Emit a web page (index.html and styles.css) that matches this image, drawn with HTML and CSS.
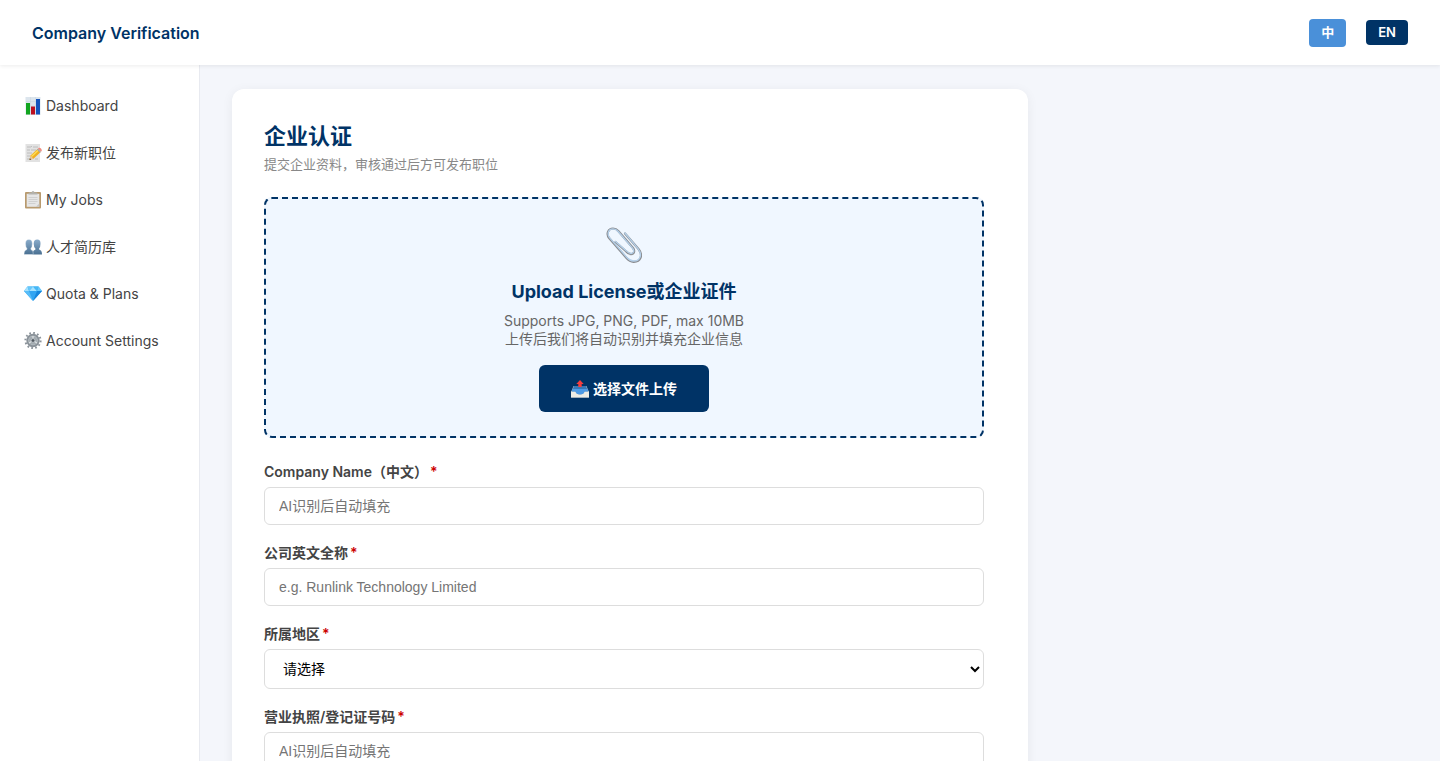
FILE: index.html
```
<!DOCTYPE html>
<html lang="zh-CN">
<head>
    <meta charset="UTF-8">
    <meta name="viewport" content="width=device-width, initial-scale=1.0">
    <title>Company Verification</title>
    <link rel="stylesheet" href="styles.css">
</head>
<body>
    <header class="topbar">
        <h1>Company Verification</h1>
        <div class="lang-switch">
            <button type="button" class="lang-btn lang-zh">中</button>
            <button type="button" class="lang-btn lang-en">EN</button>
        </div>
    </header>
    <div class="layout">
        <nav class="sidebar">
            <a href="#">
                <svg class="icon" viewBox="0 0 18 18" aria-hidden="true">
                    <rect x="1.5" width="15" height="18" fill="#dce5ed"/>
                    <path d="M2 4.500h14M2 9h14M2 13.500h14M6.500 0v18M11.500 0v18" stroke="#c8d5e0" stroke-width=".5"/>
                    <rect x="2" y="6" width="4" height="11.500" fill="#12a51f"/>
                    <rect x="7" y="9.500" width="4" height="8" fill="#bd1020"/>
                    <rect x="12" y="2" width="4" height="15.500" fill="#1453bd"/>
                </svg>
                <span>Dashboard</span>
            </a>
            <a href="#">
                <svg class="icon" viewBox="0 0 18 18" aria-hidden="true">
                    <rect x="1.500" width="14.500" height="18" fill="#e2e2e2"/>
                    <path d="M3 3h4l1-1M9 3h5M3 6h3M7 6h5M3 9h5M3 12h3M3 15h4M11 15h3" stroke="#b5b5b5" stroke-width=".8" fill="none"/>
                    <path d="M5.500 16l1-4.500 7-6.500 3 3.200-7 6.500z" fill="#f0b021"/>
                    <path d="M7.500 12.500l7-6.500" stroke="#ffdf56" stroke-width="1.200"/>
                    <path d="M5.500 16l1-4.500 3 3.200z" fill="#e7c49a"/>
                    <path d="M5.500 16l.4-1.700 1.200 1.200z" fill="#333"/>
                    <path d="M13 5.500l1-1 3 3.200-1 1z" fill="#a5a7ac"/>
                    <path d="M14 4.500l.8-.7q1.200-.4 2.200.8t.8 2.200l-.8.900z" fill="#ef8d80"/>
                </svg>
                <span>发布新职位</span>
            </a>
            <a href="#">
                <svg class="icon" viewBox="0 0 18 18" aria-hidden="true">
                    <rect x="1" y="1" width="16" height="16.500" rx="1" fill="#b89a6e"/>
                    <rect x="2.700" y="2.800" width="12.600" height="13" fill="#e6e6e6"/>
                    <path d="M4.500 6.500h9M4.500 8.500h9M4.500 10.500h9M4.500 12.500h7" stroke="#d0d0d0" stroke-width="1.200"/>
                    <path d="M12 15.800l3.300-3.300v3.300z" fill="#c6c6c6"/>
                    <path d="M4.500 3.500V2.300q0-.8 1-.8h2Q7.700 0 9 0t1.500 1.500h2q1 0 1 .8v1.200z" fill="#b3b2ad"/>
                </svg>
                <span>My Jobs</span>
            </a>
            <a href="#">
                <svg class="icon" viewBox="0 0 18 18" aria-hidden="true">
                    <defs>
                        <linearGradient id="people" x2="0" y2="1">
                            <stop stop-color="#8aaccb"/>
                            <stop offset="1" stop-color="#4a7092"/>
                        </linearGradient>
                    </defs>
                    <path d="M8.500 16.500q0-4 2.300-4.500.9-.3.700-1.300Q9.700 9.100 9.700 5.700 9.700 1.500 13.200 1.500t3.300 4.200q0 3.400-1.500 5-.1 1 1 1.400 2 .6 2 4.400z" fill="url(#people)"/>
                    <path d="M0 16.500q0-3.800 2-4.400 1.100-.4 1-1.400-1.500-1.600-1.500-5Q1.500 1.500 4.900 1.500t3.400 4.200q0 3.400-1.500 5-.1 1 1 1.400 1.500.6 1.500 4.400z" fill="url(#people)" stroke="#f4f7fa" stroke-width=".4"/>
                </svg>
                <span>人才简历库</span>
            </a>
            <a href="#">
                <svg class="icon" viewBox="0 0 18 18" aria-hidden="true">
                    <path d="M3.500 1.500h11L18 6 9 16 0 6z" fill="#31a5f2"/>
                    <path d="M3.500 1.500L5 6H0zM9 1.500L13 6H5z" fill="#a4e2ff"/>
                    <path d="M3.500 1.500H9L5 6zM14.500 1.500L18 6h-5z" fill="#66c8fb"/>
                    <path d="M9 1.500h5.500L13 6z" fill="#46b8f5"/>
                    <path d="M0 6h5l4 10z" fill="#58bdf8"/>
                    <path d="M13 6h5L9 16z" fill="#1686dc"/>
                </svg>
                <span>Quota &amp; Plans</span>
            </a>
            <a href="#">
                <svg class="icon" viewBox="0 0 18 18" aria-hidden="true">
                    <circle cx="9" cy="8.500" r="7.600" fill="none" stroke="#8a9299" stroke-width="2" stroke-dasharray="1.700 2.280"/>
                    <circle cx="9" cy="8.500" r="5.700" fill="#c5ccd0" stroke="#8a9299" stroke-width="2"/>
                    <circle cx="9" cy="8.500" r="4.300" fill="#a3abb0"/>
                    <path d="M9 8.500V4M9 8.500l4 2.500M9 8.500L5 11" stroke="#dde1e3" stroke-width="1.300"/>
                    <circle cx="9" cy="8.500" r="1.900" fill="#50585f" stroke="#bcc3c8" stroke-width=".9"/>
                </svg>
                <span>Account Settings</span>
            </a>
        </nav>
        <main class="content">
            <section class="card">
                <h2>企业认证</h2>
                <p class="subtitle">提交企业资料，审核通过后方可发布职位</p>
                <div class="upload-box">
                    <svg class="clip" viewBox="0 0 36 36" aria-hidden="true">
                        <g fill="none" stroke-linecap="round" stroke-linejoin="round">
                            <path d="M19 6.500L32.500 22C37.500 28.500 34.500 35 27.500 34.800 24.500 34.700 22.500 33.300 20.500 31L3.300 11.300C-.4 6.500 2.500 1.500 7 1.500 9.500 1.500 11 2.500 12.500 4.300L27 21C29.300 24 28 27.200 25 27.200 23 27.200 21.500 26.200 20 24.300L9.500 15" stroke="#8b8d91" stroke-width="2.200"/>
                            <path d="M18.900 6L32 21.600C36.800 27.800 34 34.200 27.500 34 24.700 33.900 22.800 32.700 20.900 30.500L3.700 10.900C.4 6.500 2.800 1.800 7 1.800 9.300 1.800 10.700 2.700 12.200 4.500L26.600 21.100C28.700 23.900 27.600 26.500 25 26.500 23.200 26.500 21.800 25.600 20.400 23.900L9.500 14.500" stroke="#b4d0ea" stroke-width="1.300"/>
                        </g>
                    </svg>
                    <h3>Upload License或企业证件</h3>
                    <p>Supports JPG, PNG, PDF, max 10MB<br>上传后我们将自动识别并填充企业信息</p>
                    <button type="button" class="upload-btn">
                        <svg class="icon" viewBox="0 0 18 18" aria-hidden="true">
                            <path d="M2.500 6h13L18 12v5.500H0V12z" fill="#aab7c2"/>
                            <path d="M3 6h12l2 5.500H1z" fill="#3578b7"/>
                            <path d="M0 11.500h4.500q.5 3 4.500 3t4.500-3H18v6H0z" fill="#eeede6"/>
                            <path d="M1.500 9h15l.5 2.500h-3.500q-.5 3-4.500 3t-4.500-3H1z" fill="#4e9be6"/>
                            <path d="M9 0l3.700 4h-2v3H7.300V4h-2z" fill="#f43e3e"/>
                        </svg>
                        <span>选择文件上传</span>
                    </button>
                </div>
                <form>
                    <div class="field">
                        <label for="nameZh">Company Name（中文）<span class="required">*</span></label>
                        <input type="text" id="nameZh" name="nameZh" placeholder="AI识别后自动填充" required>
                    </div>
                    <div class="field">
                        <label for="nameEn">公司英文全称<span class="required">*</span></label>
                        <input type="text" id="nameEn" name="nameEn" placeholder="e.g. Runlink Technology Limited" required>
                    </div>
                    <div class="field">
                        <label for="region">所属地区<span class="required">*</span></label>
                        <select id="region" name="region" required>
                            <option value="">请选择</option>
                        </select>
                    </div>
                    <div class="field">
                        <label for="license">营业执照/登记证号码<span class="required">*</span></label>
                        <input type="text" id="license" name="license" placeholder="AI识别后自动填充" required>
                    </div>
                </form>
            </section>
        </main>
    </div>
</body>
</html>
```

FILE: styles.css
```
* {
    box-sizing: border-box;
    margin: 0;
    padding: 0;
}
body {
    font-family: Inter, "Noto Sans CJK SC", sans-serif;
    font-size: 14px;
    background: #f4f6fb;
    color: #444;
    min-height: 100vh;
    display: flex;
    flex-direction: column;
}
.topbar {
    position: relative;
    display: flex;
    justify-content: space-between;
    align-items: center;
    padding: 19px 32px 18px;
    background: #fff;
    box-shadow: 0 1px 4px rgba(0, 0, 0, 0.08);
}
.topbar h1 {
    font-size: 16px;
    line-height: 20px;
    font-weight: 600;
    color: #003366;
}
.lang-switch {
    display: flex;
    align-items: baseline;
    gap: 20px;
}
.lang-btn {
    border: none;
    border-radius: 4px;
    padding: 5px 12px;
    color: #fff;
    font-family: "Liberation Sans", "Noto Sans CJK SC", sans-serif;
    font-size: 13px;
    font-weight: 600;
    line-height: 18px;
    cursor: pointer;
}
.lang-zh {
    background: #4a90d9;
}
.lang-en {
    background: #003366;
    font-family: Inter, sans-serif;
    line-height: 15px;
}
.layout {
    display: flex;
    flex: 1;
}
.sidebar {
    flex: 0 0 200px;
    padding: 17px 0;
    background: #fff;
    border-right: 1px solid #e8eaf0;
}
.sidebar a {
    display: flex;
    align-items: center;
    gap: 4px;
    padding: 13px 24px;
    line-height: 21px;
    color: #444;
    text-decoration: none;
}
.icon {
    width: 18px;
    height: 18px;
    flex: none;
}
.content {
    flex: 1;
    padding: 24px 32px;
}
.card {
    max-width: 796px;
    padding: 32px 44px 32px 32px;
    background: #fff;
    border-radius: 12px;
    box-shadow: 0 2px 12px rgba(0, 0, 0, 0.06);
}
.card h2 {
    font-size: 22px;
    line-height: 30px;
    font-weight: 700;
    color: #003366;
}
.subtitle {
    margin: 4px 0 24px;
    font-size: 13px;
    line-height: 18px;
    color: #888;
}
.upload-box {
    display: flex;
    flex-direction: column;
    align-items: center;
    margin-bottom: 24px;
    padding: 28px 24px 24px;
    border: 2px dashed #003366;
    border-radius: 8px;
    background: #f0f7ff;
    text-align: center;
}
.clip {
    width: 36px;
    height: 36px;
    margin-bottom: 17px;
}
.upload-box h3 {
    font-size: 18px;
    line-height: 24px;
    font-weight: 700;
    color: #003366;
    margin-bottom: 8px;
}
.upload-box p {
    line-height: 18px;
    color: #666;
    margin-bottom: 17px;
}
.upload-btn {
    display: flex;
    align-items: center;
    gap: 4px;
    padding: 13px 32px;
    border: none;
    border-radius: 6px;
    background: #003366;
    color: #fff;
    font-family: inherit;
    font-size: 14px;
    font-weight: 600;
    line-height: 21px;
    cursor: pointer;
}
.field {
    margin-bottom: 18px;
}
.field label {
    display: block;
    margin-bottom: 6px;
    line-height: 19px;
    font-weight: 600;
}
.required {
    margin-left: 2px;
    color: #cc0000;
}
.field input, .field select {
    display: block;
    width: 100%;
    height: 38px;
    padding: 0 14px;
    border: 1px solid #ddd;
    border-radius: 6px;
    background: #fff;
    font-family: "Liberation Sans", "Noto Sans CJK SC", sans-serif;
    font-size: 14px;
}
.field select {
    height: 40px;
    padding: 0 0 0 14px;
    color: #000;
}
.field input::placeholder {
    color: #757575;
}
```
